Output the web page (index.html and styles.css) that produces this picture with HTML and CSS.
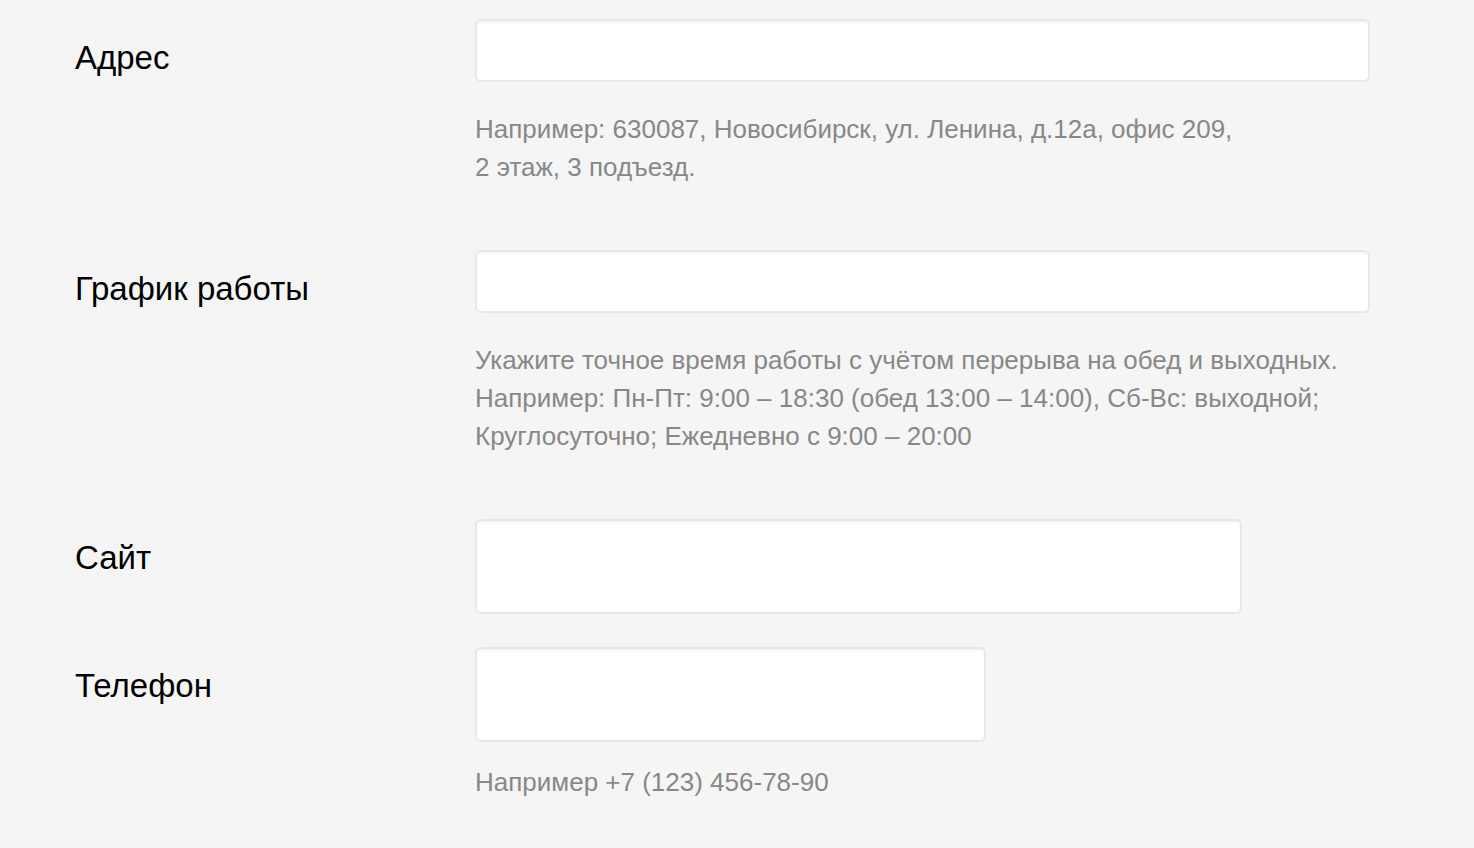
FILE: index.html
```html
<!DOCTYPE html>
<html lang="ru">
<head>
<meta charset="utf-8">
<link rel="stylesheet" href="styles.css">
</head>
<body>
<form class="form">
  <div class="row row-wide-gap">
    <label class="label">Адрес</label>
    <div class="field">
      <input class="input input-lg" type="text">
      <p class="hint">Например: 630087, Новосибирск, ул. Ленина, д.12а, офис 209,<br>2 этаж, 3 подъезд.</p>
    </div>
  </div>
  <div class="row row-wide-gap">
    <label class="label">График работы</label>
    <div class="field">
      <input class="input input-lg" type="text">
      <p class="hint">Укажите точное время работы с учётом перерыва на обед и выходных.<br>Например: Пн-Пт: 9:00 – 18:30 (обед 13:00 – 14:00), Сб-Вс: выходной;<br>Круглосуточно; Ежедневно с 9:00 – 20:00</p>
    </div>
  </div>
  <div class="row row-small-gap">
    <label class="label">Сайт</label>
    <div class="field">
      <input class="input input-md" type="text">
    </div>
  </div>
  <div class="row">
    <label class="label">Телефон</label>
    <div class="field">
      <input class="input input-sm" type="text">
      <p class="hint hint-close">Например +7 (123) 456-78-90</p>
    </div>
  </div>
</form>
</body>
</html>
```

FILE: styles.css
```css
html, body {
  margin: 0;
  padding: 0;
  background: #f5f5f5;
}
body {
  font-family: "Liberation Sans", Arial, sans-serif;
  color: #000;
}
.form {
  padding: 19px 0 0 75px;
}
.row {
  display: grid;
  grid-template-columns: 400px 1fr;
}
.row-wide-gap {
  margin-bottom: 64px;
}
.row-small-gap {
  margin-bottom: 33px;
}
.label {
  font-size: 33px;
  line-height: 38px;
  padding-top: 20px;
}
.field {
  display: flex;
  flex-direction: column;
  align-items: flex-start;
}
.input {
  box-sizing: border-box;
  background: #fff;
  border: 2px solid #e8e8e8;
  border-radius: 6px;
  box-shadow: inset 0 2px 2px rgba(0, 0, 0, 0.04);
  outline: none;
  padding: 0 14px;
  font: inherit;
  font-size: 26px;
}
.input-lg {
  width: 895px;
  height: 63px;
}
.input-md {
  width: 767px;
  height: 95px;
}
.input-sm {
  width: 511px;
  height: 95px;
}
.hint {
  margin: 28px 0 0;
  font-size: 26px;
  line-height: 38px;
  color: #888;
}
.hint-close {
  margin-top: 21px;
}
```
